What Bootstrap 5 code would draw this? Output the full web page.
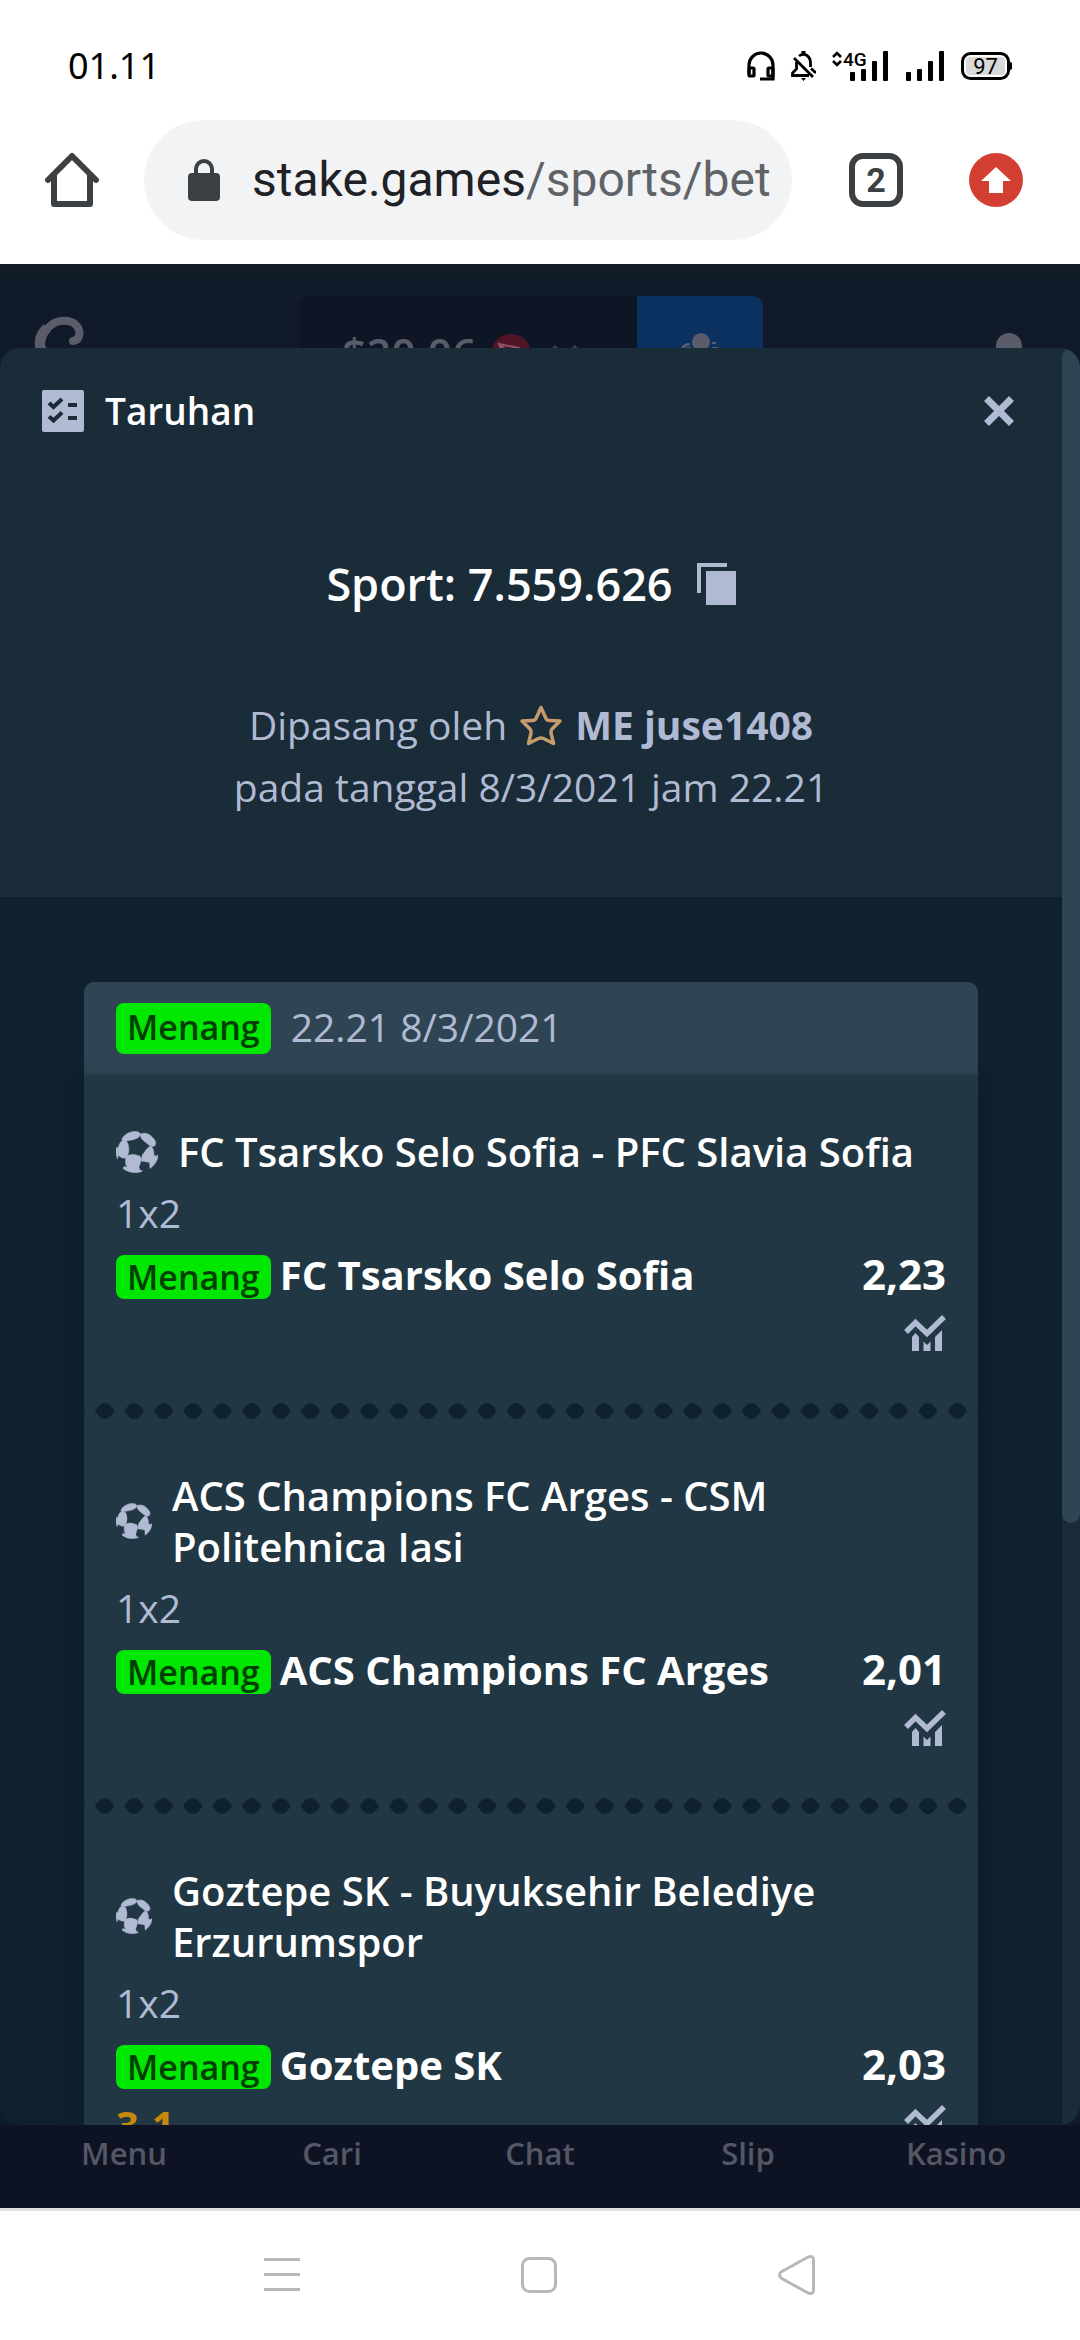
<!DOCTYPE html>
<html lang="id">
<head>
<meta charset="utf-8">
<meta name="viewport" content="width=device-width, initial-scale=1">
<title>Taruhan</title>
<link href="https://cdn.jsdelivr.net/npm/bootstrap@5.3.0/dist/css/bootstrap.min.css" rel="stylesheet">
<style>
  :root { --ink: #b1bad3; --deep: #0f212e; --panel: #1a2c38; --slip: #213743; --line: #2f4553; }
  body { font-family: "Open Sans", "Noto Sans", sans-serif; font-size: 40px; line-height: 62px; color: #fff; background: #fff; height: 100vh; overflow: hidden; }
  svg { flex: none; display: block; }
  button { border: 0; background: none; padding: 0; color: inherit; }

  /* phone status bar and browser bar */
  .status-bar { padding: 12px 68px 0 68px; height: 120px; gap: 16px; color: #000; }
  .clock { font: 36px/48px "Noto Sans", sans-serif; }
  .browser-bar { padding: 0 57px 24px 45px; color: #3c4043; }
  .url-pill { height: 120px; margin-left: 45px; margin-right: 57px; padding: 0 24px 0 44px; gap: 32px; border-radius: 60px; background: #f1f3f4; font: 48px/60px Roboto, sans-serif; color: #202124; white-space: nowrap; }
  .url-path { color: #5f6368; }
  .tab-count { width: 54px; height: 54px; margin-right: 66px; border: 6px solid #3c4043; border-radius: 14px; font: 700 34px/42px Roboto, sans-serif; color: #3c4043; }

  /* dimmed site behind the dialog */
  .site { background: #111a2a; }
  .site-head { height: 84px; padding: 32px 18px 0 0; background: linear-gradient(#121b27, #111a2a 40px); }
  .side { flex: 1 1 0; min-width: 0; }
  .side-end { padding-top: 37px; }
  .side-end svg { margin-right: 22px; }
  .dim { color: #5a5c69; }
  .wallet { width: 338px; height: 116px; padding-left: 43px; gap: 14px; border-radius: 10px 0 0 10px; background: #0e1626; font-size: 43px; font-weight: 600; }
  .wallet-btn { width: 126px; height: 116px; border-radius: 0 10px 10px 0; background: #0b3161; }
  .site-nav { padding: 12px 20px 39px; line-height: 32px; font-size: 31px; font-weight: 600; background: #0d1323; }
  .site-nav a { color: #555765; }

  /* dialog */
  .sheet { border-radius: 20px; background: var(--deep); }
  .sheet-top { background: var(--panel); padding: 42px 48px 79px 42px; }
  .sheet-title { font-size: 37px; line-height: 42px; font-weight: 600; gap: 21px; }
  .bet-id { font-size: 45px; font-weight: 600; gap: 24px; padding: 121px 0 79px 6px; }
  .soft { color: var(--ink); font-size: 39px; }
  .placed { padding-left: 6px; }
  .placed-by { gap: 12px; }
  .sheet-body { padding: 85px 84px 0; }
  .rail { width: 18px; background: var(--panel); }
  .rail-thumb { height: 66.1%; border-radius: 9px; background: var(--line); }

  .slip-head { padding: 21px 32px; gap: 20px; border-radius: 10px 10px 0 0; background: var(--line); line-height: 51px; }
  .slip-head .soft { line-height: 48px; padding-bottom: 3px; }
  .slip { background: var(--slip); box-shadow: 0 6px 14px rgba(13, 25, 35, .6); }
  .won { border-radius: 8px; padding: 0 11px; background: #00e701; color: #013e01; font-size: 34px; line-height: 44px; font-weight: 600; }
  .won-lg { line-height: 48px; padding-bottom: 3px; }
  .leg { padding: 46px 32px 37px; }
  .fixture { padding: 5px 0; gap: 20px; line-height: 51px; font-weight: 600; }
  .pick { gap: 9px; font-weight: 700; line-height: 60px; }
  .stats { height: 61px; font-weight: 700; line-height: 60px; }
  .odds { font-size: 42px; }
  .chart-btn { padding-top: 10px; }
  .score { color: #c58a0b; }

  .phone-nav { height: 132px; border-top: 3px solid #e0e0e0; padding: 0 264px 2px; }
</style>
</head>
<body class="d-flex flex-column">
<svg width="0" height="0" class="position-absolute" aria-hidden="true">
  <defs>
    <symbol id="ball" viewBox="0 0 42 42"><g fill="#b1bad3" stroke="#b1bad3" stroke-width=".5">
      <path d="M6 8C8 3 15 0 20 .5c3 .3 5 1.500 4 4-2 4-9 4.500-14 5.500-2 .3-5 0-4-2Z"/>
      <path d="M24.500 3C29 1 34 3 37 7c3 3 3.500 6 1.500 8-2 1-5 0-8-3-3-2-7-6-6-9Z"/>
      <path d="M6 10c2-1 5-.5 6 3 1.500 5 1 10-1.500 13-1 2-4 1-6 0L2 24.500 1.500 28C-.5 24-.5 19 .6 16.500L2 17c1-3 2-6 4-7Z"/>
      <path d="M10.500 25c4-2 8-2 11-.5 3 0 4.500 2.500 3.500 5.500l-2.500 7.500C18 40 12 38 10 34c-.8-3-.5-6 .5-9Z"/>
      <path d="M34.500 15c2.500 1 3.500 5 3.500 9.500l2.500.5 1.500-1c0 5-3 10-8 13.500l-.4-6L25.500 30c1-4-.4-5 1.500-7 2-2 4-6.500 7.500-8Z"/>
      <path d="M8 35.500c4 .5 8 1.500 11 2 2 .3 4-1 4.500 0-.5 1.500 1 2 3 2.500-4 2.500-13 2.500-19.500-2.500Z"/>
    </g></symbol>
    <symbol id="chart" viewBox="0 0 42 36">
      <path d="M2 17 11.500 7.500 23 18.500 40 2" fill="none" stroke="#b1bad3" stroke-width="5.500"/>
      <path d="M8 22 11.500 18 15 22V36H8ZM19.500 26.500 23 30 26.500 26.500V36H19.500ZM31 22 38 15V36H31Z" fill="#b1bad3"/>
    </symbol>
    <pattern id="holes" width="29.400" height="16" patternUnits="userSpaceOnUse" x="6">
      <path d="M5 8C8 3 11 0 14.700 0S21.400 3 24.600 8C21.400 13 18.400 16 14.700 16S8 13 5 8Z" fill="#0f212e"/>
    </pattern>
  </defs>
</svg>

<header class="bg-white flex-shrink-0">
  <div class="status-bar d-flex align-items-center">
    <span class="clock me-auto">01.11</span>
    <svg width="28" height="30" viewBox="0 0 28 30" fill="none" stroke="#000" stroke-width="3.200"><path d="M2 23V14A12 12 0 0 1 26 14V28H13"/><rect x="2" y="17" width="5" height="8" rx="1"/><rect x="21" y="17" width="5" height="8" rx="1"/></svg>
    <svg width="25" height="30" viewBox="0 0 25 30"><path d="M8 5Q12 2 16 4.500Q19.500 7 19.500 12V16M5.500 11V18L1.500 22V24.500H18M3 7 22 26M20 17.500 25 22" fill="none" stroke="#000" stroke-width="2.800"/><path d="M10.500 0h4v4h-4zM10 27h5l-2.500 3Z"/></svg>
    <svg width="57" height="30" viewBox="0 0 57 30"><path d="M1 6 5 2 9 6M1 10 5 14 9 10" fill="none" stroke="#000" stroke-width="2.600"/><text x="11" y="15" font-family="Roboto" font-weight="500" font-size="19">4G</text><rect x="18" y="21" width="5" height="9" rx="1"/><rect x="29" y="18" width="5" height="12" rx="1"/><rect x="40" y="10" width="5" height="20" rx="1"/><rect x="51" width="5" height="30" rx="1"/></svg>
    <svg width="40" height="30" viewBox="0 0 40 30"><rect x="1" y="21" width="5" height="9" rx="1"/><rect x="12" y="18" width="5" height="12" rx="1"/><rect x="23" y="10" width="5" height="20" rx="1"/><rect x="34" width="5" height="30" rx="1"/></svg>
    <svg width="51" height="30" viewBox="0 0 51 30"><rect x="1.500" y="2.500" width="46" height="25" rx="8" fill="#fff" stroke="#000" stroke-width="3"/><rect x="5" y="6" width="39" height="18" rx="4" fill="#d9d9d9"/><path d="M48 10 51 12V18L48 20Z"/><text x="24.500" y="23" font-family="Roboto" font-size="22" text-anchor="middle">97</text></svg>
  </div>
  <div class="browser-bar d-flex align-items-center">
    <button aria-label="Beranda"><svg width="54" height="54" viewBox="0 0 54 54" fill="none" stroke="#3c4043" stroke-width="6" stroke-linejoin="round" stroke-linecap="round"><path d="M3 27 27 3 51 27M9 23V51H45V23"/></svg></button>
    <button class="url-pill d-flex align-items-center flex-grow-1 overflow-hidden" aria-label="Alamat">
      <svg width="32" height="42" viewBox="0 0 32 42"><rect y="14" width="32" height="28" rx="4" fill="#3c4043"/><path d="M8 16V10A8 8 0 0 1 24 10V16" fill="none" stroke="#3c4043" stroke-width="4"/></svg>
      <span>stake.games<span class="url-path">/sports/bet</span></span>
    </button>
    <button class="tab-count text-center" aria-label="Tab">2</button>
    <button aria-label="Perbarui"><svg width="54" height="54" viewBox="0 0 54 54"><circle cx="27" cy="27" r="27" fill="#d33f32"/><path d="M27 14 42 28H34V40H20V28H12Z" fill="#fff"/></svg></button>
  </div>
</header>

<div class="site d-flex flex-column flex-grow-1 overflow-hidden">
  <div class="site-head d-flex flex-shrink-0 overflow-hidden dim">
    <div class="side"><svg width="110" height="116" viewBox="0 0 110 116"><path d="M73 45C81 44 81 34 76 29C69 22 56 24 49 31C40 40 38 53 47 60C54 65 62 67 70 67" fill="none" stroke="#5a5c69" stroke-width="8" stroke-linecap="round"/><path d="M47 32C38 40 37 52 46 60" fill="none" stroke="#5a5c69" stroke-width="10"/></svg></div>
    <div class="wallet d-flex align-items-center flex-shrink-0"><span>$20,06</span>
      <svg width="40" height="40" viewBox="0 0 40 40"><circle cx="20" cy="20" r="20" fill="#521527"/><path d="M8 10 28 14 34 20 19 36ZM8 10 21 21 28 14M21 21 34 20M21 21 19 36" fill="none" stroke="#8a5564" stroke-width="2"/></svg>
      <svg width="40" height="22" viewBox="0 0 40 22"><path d="M8 4 20 16 32 4" fill="none" stroke="#3d4150" stroke-width="6"/></svg>
    </div>
    <button class="wallet-btn flex-shrink-0" aria-label="Dompet"><svg class="mx-auto" width="42" height="42" viewBox="0 0 42 42" fill="#5a5c69"><circle cx="22" cy="9" r="9"/><path d="M2 18Q2 10 11 10V12.500Q5 12 5 18ZM7 14h5v2H7zM33 9h4v2h-4zM33 14h6v2h-6zM5 42Q5 22 22 22T39 42Z"/></svg></button>
    <div class="side side-end d-flex align-items-start justify-content-end"><svg width="62" height="42" viewBox="0 0 62 42" fill="#5a5c69"><circle cx="31" cy="13" r="13"/><path d="M10 42Q12 30 31 30T52 42Z"/></svg></div>
  </div>

  <main class="sheet d-flex flex-grow-1 overflow-hidden" role="dialog" aria-label="Taruhan">
    <div class="flex-grow-1">
      <section class="sheet-top">
        <div class="sheet-title d-flex align-items-center">
          <svg width="42" height="42" viewBox="0 0 42 42"><rect width="42" height="42" rx="2" fill="#b1bad3"/><path d="M7 13 11.500 17 20 9M7 26.500 11.500 30.500 20 22.500" fill="none" stroke="#1a2c38" stroke-width="4"/><path d="M26 13h9v4h-9zM26 26h9v4h-9z" fill="#1a2c38"/></svg>
          <h1 class="m-0 me-auto sheet-title">Taruhan</h1>
          <button aria-label="Tutup"><svg width="30" height="30" viewBox="0 0 30 30"><path d="M2.500 2.500 27.500 27.500M27.500 2.500 2.500 27.500" stroke="#b1bad3" stroke-width="7"/></svg></button>
        </div>
        <div class="bet-id d-flex justify-content-center align-items-center">
          <span>Sport: 7.559.626</span>
          <button aria-label="Salin"><svg width="39" height="42" viewBox="0 0 39 42"><path d="M0 0H30V4H4V30H0Z M9 8H39V42H9Z" fill="#b1bad3"/></svg></button>
        </div>
        <div class="placed soft text-center">
          <div class="placed-by d-flex justify-content-center align-items-center">
            <span>Dipasang oleh</span>
            <svg width="44" height="42" viewBox="0 0 44 42"><path d="M22 3.500 27 14.500Q28 16.500 30.500 16.500L41 17 33 25Q31.500 26.500 32 29L34.500 39.500 24.500 34.500Q22 33.500 19.500 34.500L9.500 39.500 12 29Q12.500 26.500 11 25L3 17 13.500 16.500Q16 16.500 17 14.500Z" fill="none" stroke="#c69c6d" stroke-width="3.500" stroke-linejoin="round"/></svg>
            <strong>ME juse1408</strong>
          </div>
          <div>pada tanggal 8/3/2021 jam 22.21</div>
        </div>
      </section>

      <section class="sheet-body">
        <div class="slip-head d-flex align-items-center"><span class="won won-lg">Menang</span><span class="soft">22.21 8/3/2021</span></div>
        <div class="slip">
          <article class="leg">
            <div class="fixture d-flex align-items-center"><svg width="42" height="42"><use href="#ball"/></svg><span>FC Tsarsko Selo Sofia - PFC Slavia Sofia</span></div>
            <div class="soft">1x2</div>
            <div class="pick d-flex align-items-baseline"><span class="won">Menang</span><span class="me-auto">FC Tsarsko Selo Sofia</span><span class="odds">2,23</span></div>
            <div class="stats d-flex align-items-start justify-content-end"><button class="chart-btn" aria-label="Statistik"><svg width="42" height="36"><use href="#chart"/></svg></button></div>
          </article>
          <svg width="100%" height="16"><rect width="100%" height="16" fill="url(#holes)"/></svg>
          <article class="leg">
            <div class="fixture d-flex align-items-center"><svg width="36" height="36"><use href="#ball"/></svg><span>ACS Champions FC Arges - CSM<br>Politehnica Iasi</span></div>
            <div class="soft">1x2</div>
            <div class="pick d-flex align-items-baseline"><span class="won">Menang</span><span class="me-auto">ACS Champions FC Arges</span><span class="odds">2,01</span></div>
            <div class="stats d-flex align-items-start justify-content-end"><button class="chart-btn" aria-label="Statistik"><svg width="42" height="36"><use href="#chart"/></svg></button></div>
          </article>
          <svg width="100%" height="16"><rect width="100%" height="16" fill="url(#holes)"/></svg>
          <article class="leg">
            <div class="fixture d-flex align-items-center"><svg width="36" height="36"><use href="#ball"/></svg><span>Goztepe SK - Buyuksehir Belediye<br>Erzurumspor</span></div>
            <div class="soft">1x2</div>
            <div class="pick d-flex align-items-baseline"><span class="won">Menang</span><span class="me-auto">Goztepe SK</span><span class="odds">2,03</span></div>
            <div class="stats d-flex align-items-start justify-content-between"><span class="score">3-1</span><button class="chart-btn" aria-label="Statistik"><svg width="42" height="36"><use href="#chart"/></svg></button></div>
          </article>
        </div>
      </section>
    </div>
    <div class="rail flex-shrink-0"><div class="rail-thumb"></div></div>
  </main>

  <nav class="site-nav d-flex text-center flex-shrink-0">
    <a class="col text-decoration-none" href="#">Menu</a>
    <a class="col text-decoration-none" href="#">Cari</a>
    <a class="col text-decoration-none" href="#">Chat</a>
    <a class="col text-decoration-none" href="#">Slip</a>
    <a class="col text-decoration-none" href="#">Kasino</a>
  </nav>
</div>

<footer class="phone-nav bg-white d-flex align-items-center justify-content-between flex-shrink-0">
  <button aria-label="Aplikasi terbaru"><svg width="36" height="36" viewBox="0 0 36 36"><path d="M0 2.500H36M0 17.500H36M0 32.500H36" stroke="#b8b8b8" stroke-width="3"/></svg></button>
  <button aria-label="Layar utama"><svg width="36" height="36" viewBox="0 0 36 36"><rect x="1.500" y="1.500" width="33" height="33" rx="7" fill="none" stroke="#b8b8b8" stroke-width="3"/></svg></button>
  <button aria-label="Kembali"><svg width="38" height="42" viewBox="0 0 38 42"><path d="M3 18 30 3Q35.500 1 35.500 6V36Q35.500 41 30 39L3 24Q0 21 3 18Z" fill="none" stroke="#b8b8b8" stroke-width="3"/></svg></button>
</footer>
<script src="https://cdn.jsdelivr.net/npm/bootstrap@5.3.0/dist/js/bootstrap.bundle.min.js"></script>
</body>
</html>
